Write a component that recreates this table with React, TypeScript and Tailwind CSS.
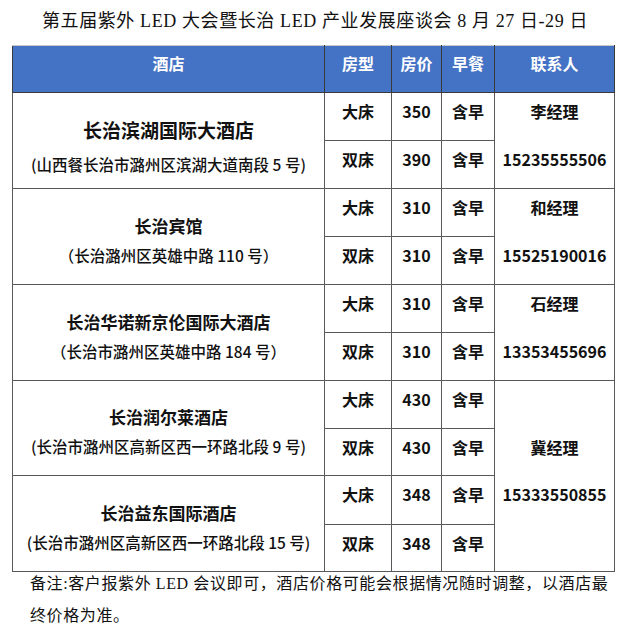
import React from 'react';

type Room = { type: string; price: string };
type Hotel = { name: string; addr: string; big?: boolean; rooms: Room[] };

const hotels: Hotel[] = [
  {
    name: '长治滨湖国际大酒店',
    addr: '(山西餐长治市潞州区滨湖大道南段 5 号)',
    big: true,
    rooms: [
      { type: '大床', price: '350' },
      { type: '双床', price: '390' },
    ],
  },
  {
    name: '长治宾馆',
    addr: '（长治潞州区英雄中路 110 号）',
    rooms: [
      { type: '大床', price: '310' },
      { type: '双床', price: '310' },
    ],
  },
  {
    name: '长治华诺新京伦国际大酒店',
    addr: '（长治市潞州区英雄中路 184 号）',
    rooms: [
      { type: '大床', price: '310' },
      { type: '双床', price: '310' },
    ],
  },
  {
    name: '长治润尔莱酒店',
    addr: '(长治市潞州区高新区西一环路北段 9 号)',
    rooms: [
      { type: '大床', price: '430' },
      { type: '双床', price: '430' },
    ],
  },
  {
    name: '长治益东国际酒店',
    addr: '(长治市潞州区高新区西一环路北段 15 号)',
    rooms: [
      { type: '大床', price: '348' },
      { type: '双床', price: '348' },
    ],
  },
];

// contact cells keyed by the hotel they start at; each slot is one sub-row high
const contacts: Record<number, { span: number; slots: string[] }> = {
  0: { span: 2, slots: ['李经理', '15235555506'] },
  1: { span: 2, slots: ['和经理', '15525190016'] },
  2: { span: 2, slots: ['石经理', '13353455696'] },
  3: { span: 4, slots: ['', '冀经理', '15333550855', ''] },
};

const td = 'border border-[#595959] p-0 align-top text-center';
const slot = 'h-[47.5px] pt-[6px] leading-[24px]';

export default function App() {
  return (
    <div className="w-[630px] h-[635px] bg-white overflow-hidden">
      <h1 className="pt-[7px] h-[45px] text-center text-[18px] leading-[28px] tracking-[0.6px] text-[#111] font-['Liberation_Serif','Noto_Sans_CJK_SC',serif]">
        第五届紫外 LED 大会暨长治 LED 产业发展座谈会 8 月 27 日-29 日
      </h1>
      <table className="ml-[12px] w-[602px] table-fixed border-collapse font-['Noto_Sans_CJK_SC',sans-serif] font-bold text-[16px] text-[#111]">
        <colgroup>
          <col className="w-[312px]" />
          <col className="w-[67px]" />
          <col className="w-[50px]" />
          <col className="w-[53px]" />
          <col className="w-[120px]" />
        </colgroup>
        <thead>
          <tr className="h-[47px] bg-[#4472c4] text-white">
            {['酒店', '房型', '房价', '早餐', '联系人'].map((h) => (
              <th key={h} className="border border-[#3a3a3a] border-t-[#c8c8c8] p-0 pt-[5px] align-top leading-[24px] font-bold">
                {h}
              </th>
            ))}
          </tr>
        </thead>
        <tbody>
          {hotels.map((hotel, i) =>
            hotel.rooms.map((room, j) => (
              <tr key={`${i}-${j}`} className="h-[47.5px]">
                {j === 0 && (
                  <td rowSpan={2} className="border border-[#595959] p-0 align-middle text-center">
                    {hotel.big ? (
                      <div className="flex flex-col items-center gap-[10px] pt-[10px]">
                        <div className="text-[19px] leading-[26px]">{hotel.name}</div>
                        <div className="text-[15.5px] leading-[22px] font-medium">{hotel.addr}</div>
                      </div>
                    ) : (
                      <div className="flex flex-col items-center gap-[6px] pt-[6px]">
                        <div className="text-[17px] leading-[24px]">{hotel.name}</div>
                        <div className="text-[15.5px] leading-[22px] font-medium">{hotel.addr}</div>
                      </div>
                    )}
                  </td>
                )}
                <td className={td}>
                  <div className="pt-[6px] leading-[24px]">{room.type}</div>
                </td>
                <td className={td}>
                  <div className="pt-[6px] leading-[24px] font-semibold">{room.price}</div>
                </td>
                <td className={td}>
                  <div className="pt-[6px] leading-[24px]">含早</div>
                </td>
                {j === 0 && contacts[i] && (
                  <td rowSpan={contacts[i].span} className={td}>
                    {contacts[i].slots.map((s, k) => (
                      <div key={k} className={slot}>
                        {s}
                      </div>
                    ))}
                  </td>
                )}
              </tr>
            ))
          )}
        </tbody>
      </table>
      <p className="-mt-[4px] pl-[30px] text-[16px] leading-[32px] tracking-[0.6px] text-[#111] font-['Liberation_Serif','Noto_Sans_CJK_SC',serif]">
        备注:客户报紫外 LED 会议即可，酒店价格可能会根据情况随时调整，以酒店最
        <br />
        终价格为准。
      </p>
    </div>
  );
}
